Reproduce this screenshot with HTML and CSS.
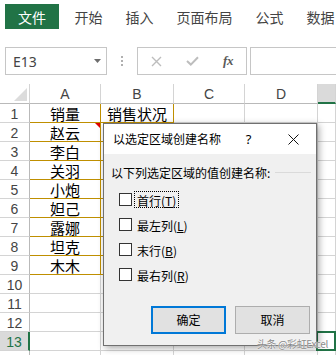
FILE: index.html
```html
<!DOCTYPE html>
<html lang="zh-CN">
<head>
<meta charset="utf-8">
<title>以选定区域创建名称</title>
<link rel="stylesheet" href="styles.css">
</head>
<body>
<div class="app">
  <div class="tabs">
    <div class="tab file">文件</div>
    <div class="tab">开始</div>
    <div class="tab">插入</div>
    <div class="tab">页面布局</div>
    <div class="tab">公式</div>
    <div class="tab">数据</div>
  </div>

  <div class="fbar">
    <div class="namebox">
      <span>E13</span>
      <svg width="7" height="4" viewBox="0 0 7 4"><polygon points="0,0 7,0 3.5,4" fill="#6d6d6d"/></svg>
    </div>
    <div class="grip">
      <svg width="2" height="10" viewBox="0 0 2 10"><rect x="0" y="0" width="2" height="2" fill="#b0b0b0"/><rect x="0" y="4" width="2" height="2" fill="#b0b0b0"/><rect x="0" y="8" width="2" height="2" fill="#b0b0b0"/></svg>
    </div>
    <div class="fbtns">
      <span class="fb"><svg width="11" height="11" viewBox="0 0 11 11"><path d="M1 1 L10 10 M10 1 L1 10" stroke="#bdbdbd" stroke-width="1.4" fill="none"/></svg></span>
      <span class="fb"><svg width="13" height="10" viewBox="0 0 13 10"><path d="M1 5 L4.8 8.6 L12 1.2" stroke="#bdbdbd" stroke-width="2" fill="none"/></svg></span>
      <span class="fb fx">fx</span>
    </div>
    <div class="finput"></div>
  </div>

  <div class="sheet">
    <div class="c hd corner"><svg width="13" height="13" viewBox="0 0 13 13"><polygon points="13,0 13,13 0,13" fill="#dcdcdc"/></svg></div>
    <div class="c hd">A</div>
    <div class="c hd">B</div>
    <div class="c hd">C</div>
    <div class="c hd">D</div>
    <div class="c hd selcol"></div>

    <div class="c rh">1</div><div class="c g">销量</div><div class="c g">销售状况</div><div class="c"></div><div class="c"></div><div class="c"></div>
    <div class="c rh">2</div><div class="c g note">赵云</div><div class="c g"></div><div class="c"></div><div class="c"></div><div class="c"></div>
    <div class="c rh">3</div><div class="c g">李白</div><div class="c g"></div><div class="c"></div><div class="c"></div><div class="c"></div>
    <div class="c rh">4</div><div class="c g">关羽</div><div class="c g"></div><div class="c"></div><div class="c"></div><div class="c"></div>
    <div class="c rh">5</div><div class="c g">小炮</div><div class="c g"></div><div class="c"></div><div class="c"></div><div class="c"></div>
    <div class="c rh">6</div><div class="c g">妲己</div><div class="c g"></div><div class="c"></div><div class="c"></div><div class="c"></div>
    <div class="c rh">7</div><div class="c g">露娜</div><div class="c g"></div><div class="c"></div><div class="c"></div><div class="c"></div>
    <div class="c rh">8</div><div class="c g">坦克</div><div class="c g"></div><div class="c"></div><div class="c"></div><div class="c"></div>
    <div class="c rh">9</div><div class="c g">木木</div><div class="c g"></div><div class="c"></div><div class="c"></div><div class="c"></div>
    <div class="c rh">10</div><div class="c"></div><div class="c"></div><div class="c"></div><div class="c"></div><div class="c"></div>
    <div class="c rh">11</div><div class="c"></div><div class="c"></div><div class="c"></div><div class="c"></div><div class="c"></div>
    <div class="c rh">12</div><div class="c"></div><div class="c"></div><div class="c"></div><div class="c"></div><div class="c"></div>
    <div class="c rh selrow">13</div><div class="c"></div><div class="c"></div><div class="c"></div><div class="c"></div><div class="c cur"></div>
    <div class="c rh"></div><div class="c"></div><div class="c"></div><div class="c"></div><div class="c"></div><div class="c"></div>
  </div>

  <div class="dialog">
    <div class="dlg-title">
      <span class="dlg-caption">以选定区域创建名称</span>
      <span class="tbtn help">?</span>
      <span class="tbtn close"><svg width="11" height="11" viewBox="0 0 11 11"><path d="M0.5 0.5 L10.5 10.5 M10.5 0.5 L0.5 10.5" stroke="#111" stroke-width="1" fill="none"/></svg></span>
    </div>
    <div class="dlg-body">
      <div class="group-label"><span>以下列选定区域的值创建名称:</span><span class="sep"></span></div>
      <div class="options">
        <div class="opt"><span class="box"></span><span class="lbl focus">首行(<u>T</u>)</span></div>
        <div class="opt"><span class="box"></span><span class="lbl">最左列(<u>L</u>)</span></div>
        <div class="opt"><span class="box"></span><span class="lbl">末行(<u>B</u>)</span></div>
        <div class="opt"><span class="box"></span><span class="lbl">最右列(<u>R</u>)</span></div>
      </div>
      <div class="buttons">
        <span class="btn primary">确定</span>
        <span class="btn">取消</span>
      </div>
    </div>
  </div>

  <div class="watermark">头条 @彩虹Excel</div>
</div>
</body>
</html>
```

FILE: styles.css
```css
* { box-sizing: border-box; }

body {
  margin: 0;
  width: 336px;
  height: 355px;
  overflow: hidden;
  background: #ffffff;
  font-family: "Noto Sans CJK SC", "Noto Sans", sans-serif;
}

.app {
  position: relative;
  width: 336px;
  height: 355px;
  overflow: hidden;
}

/* ribbon tabs */
.tabs {
  display: flex;
  height: 30px;
  padding: 4px 0 1px 5px;
  white-space: nowrap;
}
.tab {
  display: flex;
  align-items: center;
  padding: 0 11.5px;
  font-size: 14px;
  line-height: 1;
  color: #444444;
}
.tab:last-child {
  padding-right: 0;
}
.tab.file {
  background: #217346;
  color: #ffffff;
  padding: 0 13px;
  margin-right: 4px;
}

/* formula bar */
.fbar {
  display: flex;
  height: 54px;
  padding: 17px 0 9px 5px;
}
.namebox {
  width: 102px;
  border: 1px solid #c6c6c6;
  display: flex;
  align-items: center;
  justify-content: space-between;
  padding: 0 5px 0 7px;
  font-family: "Noto Sans", "Liberation Sans", sans-serif;
  font-size: 14px;
  color: #444444;
}
.grip {
  width: 30px;
  display: flex;
  align-items: center;
  justify-content: center;
}
.fbtns {
  width: 110px;
  border: 1px solid #c6c6c6;
  display: flex;
  align-items: center;
}
.fb {
  width: 36px;
  display: flex;
  align-items: center;
  justify-content: center;
}
.fx {
  font-family: "Liberation Serif", serif;
  font-style: italic;
  font-weight: bold;
  font-size: 13px;
  color: #5a5a5a;
  letter-spacing: -0.5px;
}
.finput {
  flex: 1;
  margin-left: 3px;
  border: 1px solid #c6c6c6;
  border-right: none;
}

/* sheet grid */
.sheet {
  display: grid;
  grid-template-columns: 30px 71px 73px 71px 73px 1fr;
  grid-template-rows: 20px repeat(14, 19px);
}
.c {
  border-right: 1px solid #d4d4d4;
  border-bottom: 1px solid #d4d4d4;
  display: flex;
  align-items: center;
  justify-content: center;
  font-size: 15px;
  line-height: 1;
  color: #000000;
  padding-top: 1px;
}
.hd {
  border-bottom-color: #b9b9b9;
  font-family: "Liberation Sans", sans-serif;
  font-size: 14px;
  color: #444444;
}
.corner {
  justify-content: flex-end;
  align-items: flex-end;
  padding: 0 2px 2px 0;
}
.rh {
  border-right-color: #b9b9b9;
  font-family: "Liberation Sans", sans-serif;
  font-size: 14px;
  color: #444444;
}
.g {
  border-right-color: #bf8f00;
  border-bottom-color: #bf8f00;
}
.note {
  position: relative;
}
.note::after {
  content: "";
  position: absolute;
  top: 0;
  right: 0;
  border-top: 5px solid #e00000;
  border-left: 5px solid transparent;
}
.selcol {
  background: #dadada;
  border-bottom: 2px solid #217346;
}
.selrow {
  background: #dadada;
  color: #217346;
  border-right: 2px solid #217346;
}
.cur {
  position: relative;
}
.cur::after {
  content: "";
  position: absolute;
  left: -2px;
  top: -1px;
  right: -1px;
  bottom: -1px;
  border: 2px solid #217346;
}

/* dialog */
.dialog {
  position: absolute;
  left: 103px;
  top: 123px;
  width: 214px;
  height: 223px;
  border: 1px solid #707070;
  background: #f0f0f0;
  box-shadow: 2px 2px 7px rgba(0, 0, 0, 0.35);
  font-size: 12px;
  color: #000000;
  display: flex;
  flex-direction: column;
}
.dlg-title {
  height: 30px;
  background: #ffffff;
  display: flex;
  align-items: center;
  padding-left: 9px;
}
.dlg-caption {
  flex: 1;
  line-height: 1;
}
.tbtn {
  width: 45px;
  height: 30px;
  display: flex;
  align-items: center;
  justify-content: center;
}
.help {
  font-family: "Noto Sans", sans-serif;
  font-size: 13px;
}
.dlg-body {
  flex: 1;
  padding: 10px 0 0 7px;
  display: flex;
  flex-direction: column;
}
.group-label {
  display: flex;
  align-items: center;
  height: 17px;
  line-height: 17px;
}
.sep {
  flex: 1;
  margin: 0 5px 0 5px;
  border-top: 1px solid #dadada;
}
.options {
  margin-top: 6px;
  padding-left: 8px;
  display: flex;
  flex-direction: column;
}
.opt {
  height: 25px;
  display: flex;
  align-items: center;
}
.box {
  width: 13px;
  height: 13px;
  border: 1px solid #333333;
  background: #ffffff;
  margin-right: 2px;
}
.lbl {
  padding: 0 2px;
  height: 17px;
  line-height: 17px;
  border: 1px solid transparent;
}
.lbl.focus {
  border: 1px dotted #000000;
}
.lbl u {
  text-decoration: underline;
  text-underline-offset: 1px;
}
.buttons {
  margin-top: 19px;
  display: flex;
  justify-content: flex-end;
  gap: 9px;
  padding-right: 6px;
}
.btn {
  width: 75px;
  height: 28px;
  background: #e1e1e1;
  border: 1px solid #adadad;
  display: flex;
  align-items: center;
  justify-content: center;
  line-height: 1;
}
.btn.primary {
  border: 2px solid #0078d7;
}

.watermark {
  position: absolute;
  left: 257px;
  top: 337px;
  font-size: 10px;
  line-height: 13px;
  letter-spacing: -0.4px;
  color: #8a8a8a;
  text-shadow: 0 0 1px #ffffff, 0 0 2px #ffffff;
  white-space: nowrap;
}
```
